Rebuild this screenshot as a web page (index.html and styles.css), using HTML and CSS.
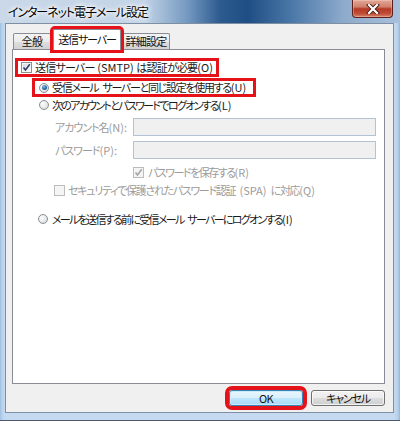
FILE: index.html
```html
<!DOCTYPE html>
<html lang="ja">
<head>
    <meta charset="UTF-8">
    <title>インターネット電子メール設定</title>
    <link rel="stylesheet" href="styles.css">
</head>
<body>
    <div class="window">
        <div class="titlebar">
            <span class="title">インターネット電子メール設定</span>
            <div class="close-btn">
                <svg width="14" height="10" viewBox="0 0 14 10">
                    <path d="M3 1 L11 9 M11 1 L3 9" stroke="#4a1a14" stroke-width="4" stroke-linecap="square"/>
                    <path d="M3 1 L11 9 M11 1 L3 9" stroke="#fff" stroke-width="2.2" stroke-linecap="square"/>
                </svg>
            </div>
        </div>
        <div class="frame">
            <div class="client">
                <div class="tabs">
                    <div class="tab tab-general">全般</div>
                    <div class="tab tab-send active marked">送信サーバー</div>
                    <div class="tab tab-detail">詳細設定</div>
                </div>

                <div class="panel">
                    <div class="row row-smtp">
                        <label class="opt marked">
                            <span class="cb checked">
                                <svg width="9" height="9" viewBox="0 0 9 9"><path d="M1.5 4.5 L3.5 7 L7.8 1.2" fill="none" stroke="#2b3f6a" stroke-width="1.6"/></svg>
                            </span>
                            <span>送信サーバー <span class="latin">(SMTP)</span> は認証が必要<span class="latin">(O)</span></span>
                        </label>
                    </div>

                    <div class="row row-same">
                        <label class="opt marked">
                            <span class="rb checked"></span>
                            <span>受信メール サーバーと同じ設定を使用する<span class="latin">(U)</span></span>
                        </label>
                    </div>

                    <div class="row row-own">
                        <label class="opt">
                            <span class="rb"></span>
                            <span>次のアカウントとパスワードでログオンする<span class="latin">(L)</span></span>
                        </label>
                    </div>

                    <div class="row row-field row-account">
                        <span class="field-label disabled">アカウント名<span class="latin">(N):</span></span>
                        <span class="field"></span>
                    </div>

                    <div class="row row-field row-password">
                        <span class="field-label disabled">パスワード<span class="latin">(P):</span></span>
                        <span class="field"></span>
                    </div>

                    <div class="row row-save">
                        <label class="opt disabled">
                            <span class="cb checked off">
                                <svg width="9" height="9" viewBox="0 0 9 9"><path d="M1.5 4.5 L3.5 7 L7.8 1.2" fill="none" stroke="#a6a6a6" stroke-width="1.6"/></svg>
                            </span>
                            <span>パスワードを保存する<span class="latin">(R)</span></span>
                        </label>
                    </div>

                    <div class="row row-spa">
                        <label class="opt disabled">
                            <span class="cb off"></span>
                            <span>セキュリティで保護されたパスワード認証 <span class="latin">(SPA)</span> に対応<span class="latin">(Q)</span></span>
                        </label>
                    </div>

                    <div class="row row-before">
                        <label class="opt">
                            <span class="rb"></span>
                            <span>メールを送信する前に受信メール サーバーにログオンする<span class="latin">(I)</span></span>
                        </label>
                    </div>
                </div>

                <div class="footer">
                    <button class="btn default marked-thick">OK</button>
                    <button class="btn btn-cancel">キャンセル</button>
                </div>
            </div>
        </div>
    </div>
</body>
</html>
```

FILE: styles.css
```css
* {
    box-sizing: border-box;
}

body {
    margin: 0;
    width: 400px;
    height: 421px;
    overflow: hidden;
    font-family: "Noto Sans CJK JP", "Noto Sans", sans-serif;
    font-size: 11px;
    font-feature-settings: "palt";
    letter-spacing: -0.6px;
    color: #1a1a1a;
}

.latin {
    letter-spacing: 0;
}

.window {
    width: 400px;
    height: 421px;
    display: flex;
    flex-direction: column;
}

/* title bar */

.titlebar {
    height: 23px;
    display: flex;
    align-items: flex-start;
    justify-content: space-between;
    padding-left: 8px;
    background: linear-gradient(to right, #cad8e8 0%, #c3d4e7 36%, #7398c0 47%, #2d5b8f 55%, #1f4e84 62%, #4b78a8 73%, #8eabcc 86%, #a9c0db 100%);
}

.title {
    margin-top: 3px;
    font-size: 12px;
    line-height: 17px;
    letter-spacing: -1.1px;
    color: #000;
    text-shadow: 0 0 6px #fff, 0 0 6px #fff, 0 0 3px #fff;
}

.close-btn {
    width: 41px;
    height: 18px;
    margin-right: 7px;
    display: flex;
    align-items: center;
    justify-content: center;
    border: 1px solid #5a2019;
    border-top: none;
    border-radius: 0 0 4px 4px;
    background: linear-gradient(#e2a898 0%, #d0806c 40%, #b53a26 52%, #bf4a35 78%, #d6826a 100%);
    box-shadow: inset 0 0 0 1px rgba(255, 220, 210, .35);
}

/* window frame + client area */

.frame {
    flex: 1;
    padding: 0 6px 7px 5px;
    background: linear-gradient(to right, #9fbfe0 0px, #b8d1ec 2px, #c5daf0 5px, #c5daf0 394px, #b6cfea 398px, #94b3d6 400px);
    border-bottom: 1px solid #4c5a6b;
}

.client {
    height: 100%;
    display: flex;
    flex-direction: column;
    padding: 5px 8px 0 6px;
    background: #f0f0f0;
    border: 1px solid #7f8fa3;
}

/* tabs */

.tabs {
    height: 20px;
    display: flex;
    align-items: flex-end;
    padding-left: 1px;
}

.tab {
    height: 16px;
    line-height: 15px;
    text-align: center;
    border: 1px solid #898c95;
    border-bottom: none;
    border-radius: 2px 2px 0 0;
    background: linear-gradient(#f3f3f3 0%, #ebebeb 50%, #dedede 51%, #d2d2d2 100%);
    color: #111;
    white-space: nowrap;
}

.tab-general {
    width: 38px;
}

.tab-send {
    width: 68px;
    margin: 0 1px 0 2px;
    letter-spacing: -1.1px;
}

.tab-detail {
    width: 48px;
    letter-spacing: -0.8px;
}

.tab.active {
    position: relative;
    z-index: 2;
    height: 21px;
    margin-bottom: -1px;
    line-height: 18px;
    background: #fff;
}

.marked {
    outline: 3px solid #e5121a;
}

.marked-thick {
    outline: 4px solid #e5121a;
}

/* panel */

.panel {
    height: 335px;
    display: flex;
    flex-direction: column;
    background: #fff;
    border: 1px solid #898c95;
}

.row {
    display: flex;
    align-items: center;
    white-space: nowrap;
    word-spacing: 3px;
}

.opt {
    display: inline-flex;
    align-items: center;
    gap: 3px;
    line-height: 13px;
}

.disabled {
    color: #9b9b9b;
}

.row-smtp {
    margin: 11px 0 0 5px;
    height: 13px;
    letter-spacing: -0.8px;
    word-spacing: 1px;
}

.row-smtp .opt {
    height: 13px;
    padding: 0 3px 0 3px;
}

.row-same {
    margin: 7px 0 0 22px;
    height: 13px;
    letter-spacing: -1.3px;
}

.row-same .opt {
    height: 13px;
    padding: 0 7px 0 4px;
}

.row-own {
    margin: 4px 0 0 26px;
    height: 14px;
    letter-spacing: -1.7px;
}

.row-field {
    margin-left: 42px;
    height: 18px;
}

.row-account {
    margin-top: 6px;
    letter-spacing: -1px;
}

.row-password {
    margin-top: 5px;
    letter-spacing: -1px;
}

.field-label {
    width: 78px;
}

.field {
    width: 243px;
    height: 18px;
    background: #f0f0f0;
    border: 1px solid #b5c2d3;
}

.row-save {
    margin: 6px 0 0 120px;
    height: 14px;
    letter-spacing: -1.5px;
}

.row-save .opt {
    gap: 4px;
}

.row-spa {
    margin: 4px 0 0 41px;
    height: 14px;
    letter-spacing: -1.3px;
}

.row-before {
    margin: 15px 0 0 25px;
    height: 14px;
    letter-spacing: -1.7px;
}

.row-before .opt {
    gap: 4px;
}

/* checkbox and radio */

.cb {
    width: 11px;
    height: 11px;
    flex: none;
    display: flex;
    align-items: center;
    justify-content: center;
    border: 1px solid #8e8f8f;
    background: linear-gradient(135deg, #d4d8dd 0%, #eef0f2 60%, #fbfbfb 100%);
    box-shadow: inset 0 0 0 1px #f6f6f6;
}

.cb.off {
    border-color: #bcbcbc;
    background: #f4f4f4;
}

.rb {
    width: 10px;
    height: 10px;
    flex: none;
    display: flex;
    align-items: center;
    justify-content: center;
    border: 1px solid #8e8f8f;
    border-radius: 50%;
    background: radial-gradient(circle at 35% 35%, #fdfdfd 0%, #e6e8ea 55%, #c9ced4 100%);
}

.rb.checked::after {
    content: "";
    width: 5px;
    height: 5px;
    border-radius: 50%;
    background: radial-gradient(circle at 40% 35%, #8fc0ea 0%, #2d6fae 50%, #173f73 100%);
}

/* buttons */

.footer {
    display: flex;
    justify-content: flex-end;
    gap: 8px;
    margin-top: 6px;
}

.btn {
    width: 74px;
    height: 16px;
    padding: 0;
    font: inherit;
    letter-spacing: inherit;
    line-height: 13px;
    color: #111;
    border: 1px solid #707070;
    border-radius: 3px;
    background: linear-gradient(#f2f2f2 0%, #ebebeb 49%, #dddddd 50%, #cfcfcf 100%);
    box-shadow: inset 0 0 0 1px rgba(255, 255, 255, .7);
}

.btn-cancel {
    letter-spacing: -1.2px;
}

.btn.default {
    border-color: #3c7fb1;
    background: linear-gradient(#eaf6fd 0%, #d9f0fc 49%, #bee6fd 50%, #a7d9f5 100%);
    box-shadow: inset 0 0 0 1px #c7ecfd;
}
```
